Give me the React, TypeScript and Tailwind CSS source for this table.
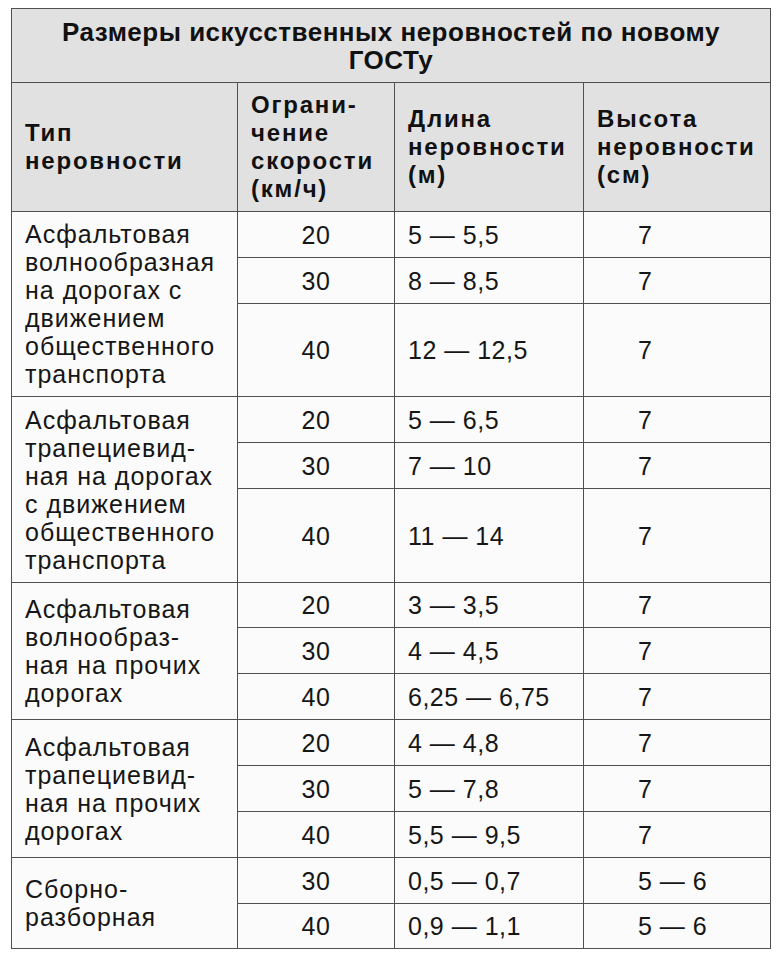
import React from "react";

type Sub = { speed: string; len: string; h: string; hgt: string };
type Group = { label: React.ReactNode; rows: Sub[] };

const groups: Group[] = [
  {
    label: (
      <>
        Асфальтовая
        <br />
        волнообразная
        <br />
        на дорогах с
        <br />
        движением
        <br />
        общественного
        <br />
        транспорта
      </>
    ),
    rows: [
      { speed: "20", len: "5 — 5,5", h: "7", hgt: "h-[45px]" },
      { speed: "30", len: "8 — 8,5", h: "7", hgt: "h-[45px]" },
      { speed: "40", len: "12 — 12,5", h: "7", hgt: "h-[92px]" },
    ],
  },
  {
    label: (
      <>
        Асфальтовая
        <br />
        трапециевид-
        <br />
        ная на дорогах
        <br />с движением
        <br />
        общественного
        <br />
        транспорта
      </>
    ),
    rows: [
      { speed: "20", len: "5 — 6,5", h: "7", hgt: "h-[45px]" },
      { speed: "30", len: "7 — 10", h: "7", hgt: "h-[45px]" },
      { speed: "40", len: "11 — 14", h: "7", hgt: "h-[93px]" },
    ],
  },
  {
    label: (
      <>
        Асфальтовая
        <br />
        волнообраз-
        <br />
        ная на прочих
        <br />
        дорогах
      </>
    ),
    rows: [
      { speed: "20", len: "3 — 3,5", h: "7", hgt: "h-[44px]" },
      { speed: "30", len: "4 — 4,5", h: "7", hgt: "h-[45px]" },
      { speed: "40", len: "6,25 — 6,75", h: "7", hgt: "h-[45px]" },
    ],
  },
  {
    label: (
      <>
        Асфальтовая
        <br />
        трапециевид-
        <br />
        ная на прочих
        <br />
        дорогах
      </>
    ),
    rows: [
      { speed: "20", len: "4 — 4,8", h: "7", hgt: "h-[45px]" },
      { speed: "30", len: "5 — 7,8", h: "7", hgt: "h-[45px]" },
      { speed: "40", len: "5,5 — 9,5", h: "7", hgt: "h-[45px]" },
    ],
  },
  {
    label: (
      <>
        Сборно-
        <br />
        разборная
      </>
    ),
    rows: [
      { speed: "30", len: "0,5 — 0,7", h: "5 — 6", hgt: "h-[45px]" },
      { speed: "40", len: "0,9 — 1,1", h: "5 — 6", hgt: "h-[44px]" },
    ],
  },
];

const text =
  "text-[25px] leading-[28px] text-[#161616] tracking-[1px] [font-family:'Liberation_Sans',Arial,sans-serif]";
const num =
  "text-[25px] leading-[28px] text-[#161616] tracking-[0.5px] [font-family:'Liberation_Sans',Arial,sans-serif]";
const head =
  "text-[24px] leading-[28px] font-bold text-[#111] tracking-[1.8px] [font-family:'Liberation_Sans',Arial,sans-serif]";

export default function App() {
  return (
    <div className="min-h-[960px] w-[780px] bg-white pl-[11px] pt-[8px]">
      <div className="w-[760px] border border-[#505050] bg-[#505050]">
        {/* Title */}
        <div className="flex h-[73px] flex-col items-center justify-center bg-[#e1e1e1] text-center text-[26px] leading-[28px] font-bold text-[#111] tracking-[0.5px] [font-family:'Liberation_Sans',Arial,sans-serif]">
          <span>Размеры искусственных неровностей по новому</span>
          <span>ГОСТу</span>
        </div>
        {/* Header row */}
        <div className="mt-px grid h-[128px] grid-cols-[225px_156px_188px_186px] gap-px">
          <div className={`flex items-center bg-[#e1e1e1] pl-[13px] ${head}`}>
            <div>
              Тип
              <br />
              неровности
            </div>
          </div>
          <div className={`flex items-center bg-[#e1e1e1] pl-[13px] ${head}`}>
            <div>
              Ограни-
              <br />
              чение
              <br />
              скорости
              <br />
              (км/ч)
            </div>
          </div>
          <div className={`flex items-center bg-[#e1e1e1] pl-[13px] ${head}`}>
            <div>
              Длина
              <br />
              неровности
              <br />
              (м)
            </div>
          </div>
          <div className={`flex items-center bg-[#e1e1e1] pl-[13px] ${head}`}>
            <div>
              Высота
              <br />
              неровности
              <br />
              (см)
            </div>
          </div>
        </div>
        {/* Body groups */}
        {groups.map((g, gi) => (
          <div key={gi} className="mt-px grid grid-cols-[225px_535px] gap-px">
            <div className={`flex items-center bg-[#fbfbfb] pl-[13px] ${text}`}>
              <div>{g.label}</div>
            </div>
            <div className="flex flex-col gap-px">
              {g.rows.map((r, ri) => (
                <div
                  key={ri}
                  className={`grid grid-cols-[156px_188px_186px] gap-px ${r.hgt}`}
                >
                  <div className={`flex items-center justify-center bg-[#fbfbfb] ${num}`}>
                    {r.speed}
                  </div>
                  <div className={`flex items-center bg-[#fbfbfb] pl-[13px] ${num}`}>
                    {r.len}
                  </div>
                  <div className={`flex items-center bg-[#fbfbfb] pl-[54px] ${num}`}>
                    {r.h}
                  </div>
                </div>
              ))}
            </div>
          </div>
        ))}
      </div>
    </div>
  );
}
